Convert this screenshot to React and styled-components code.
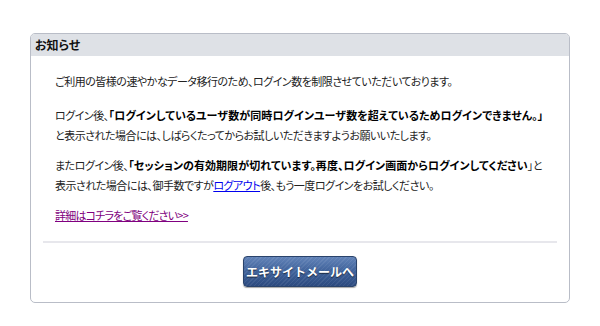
import React from 'react'
import styled, { createGlobalStyle } from 'styled-components'

const GlobalStyle = createGlobalStyle`
  body {
    margin: 0;
    background: #fff;
    font-family: "Noto Sans CJK JP", "Noto Sans", sans-serif;
    font-feature-settings: "palt";
    color: #222;
  }
`

const Page = styled.div`
  padding: 33px 30px 0 30px;
`

const Panel = styled.section`
  width: 538px;
  height: 268px;
  border: 1px solid #b9bdc7;
  border-radius: 5px;
  overflow: hidden;
  display: flex;
  flex-direction: column;
`

const PanelHead = styled.h2`
  margin: 0;
  height: 22px;
  line-height: 22px;
  padding-left: 4px;
  background: #dee1e6;
  font-size: 12px;
  font-weight: bold;
  color: #111;
`

const PanelBody = styled.div`
  padding: 15px 12px 0 12px;
  flex: 1;
  display: flex;
  flex-direction: column;
`

const Notes = styled.div`
  padding: 0 12px;
  font-size: 11px;
  line-height: 20px;
  white-space: nowrap;
`

const Para = styled.p`
  margin: 0 0 ${p => p.$gap ?? 10}px 0;
  letter-spacing: -0.5px;
`

const Strong = styled.b`
  font-weight: bold;
  color: #000;
  letter-spacing: 0.05px;
`

const Link = styled.a`
  color: ${p => (p.$visited ? '#800080' : '#0000ee')};
  text-decoration: underline;
  letter-spacing: ${p => (p.$visited ? '-0.8px' : '-0.5px')};
`

const Divider = styled.hr`
  margin: 16px 0 0 0;
  border: 0;
  height: 2px;
  background: #e7e7ec;
`

const Actions = styled.div`
  display: flex;
  justify-content: center;
  padding-top: 13px;
`

const MailButton = styled.button`
  width: 114px;
  height: 31px;
  border: 1px solid #2a436b;
  border-radius: 4px;
  background:
    repeating-linear-gradient(135deg, rgba(255,255,255,0.07) 0 1px, rgba(0,0,0,0) 1px 3px),
    linear-gradient(#6283b8, #3f629a 50%, #2c4a7f);
  box-shadow: 0 1px 1px rgba(0,0,0,0.35);
  color: #fff;
  font-family: inherit;
  font-size: 12px;
  font-weight: bold;
  text-shadow: 0 1px 1px rgba(0,0,0,0.6);
  cursor: pointer;
  padding: 0;
`

export default function App () {
  return (
    <Page>
      <GlobalStyle />
      <Panel>
        <PanelHead>お知らせ</PanelHead>
        <PanelBody>
          <Notes>
            <Para $gap={14}>ご利用の皆様の速やかなデータ移行のため、ログイン数を制限させていただいております。</Para>
            <Para>
              ログイン後、<Strong>「ログインしているユーザ数が同時ログインユーザ数を超えているためログインできません。」</Strong><br />
              と表示された場合には、しばらくたってからお試しいただきますようお願いいたします。
            </Para>
            <Para>
              またログイン後、<Strong>「セッションの有効期限が切れています。再度、ログイン画面からログインしてください</Strong>」と<br />
              表示された場合には、御手数ですが<Link href="#">ログアウト</Link>後、もう一度ログインをお試しください。
            </Para>
            <Para $gap={0}>
              <Link href="#" $visited>詳細はコチラをご覧ください&gt;&gt;</Link>
            </Para>
          </Notes>
          <Divider />
          <Actions>
            <MailButton>エキサイトメールへ</MailButton>
          </Actions>
        </PanelBody>
      </Panel>
    </Page>
  )
}
